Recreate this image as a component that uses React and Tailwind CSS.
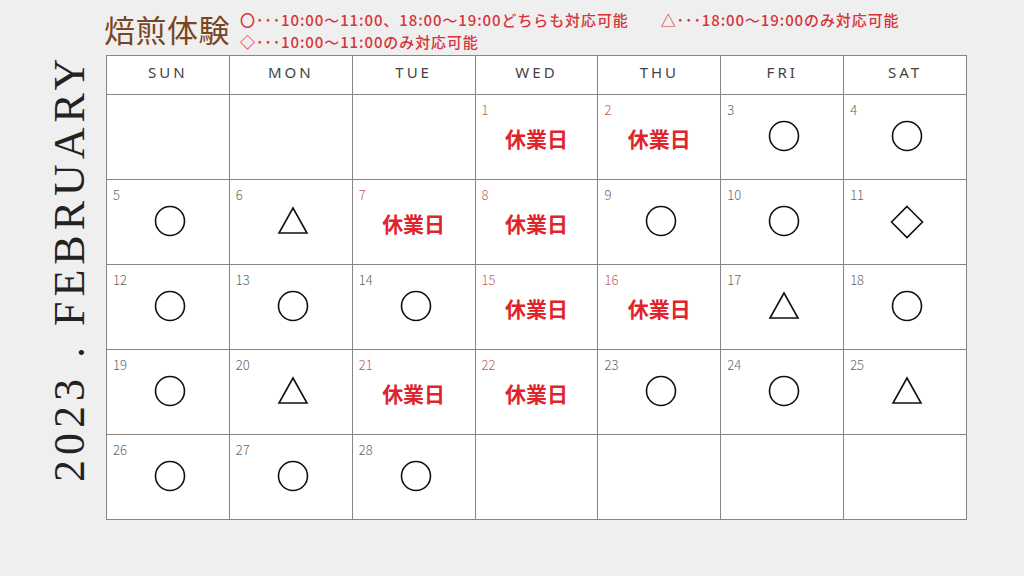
import React from "react";

const DAYS = ["SUN", "MON", "TUE", "WED", "THU", "FRI", "SAT"];

// o = both slots, t = evening only, d = morning only, x = closed
const WEEKS = [
  [null, null, null, [1, "x"], [2, "x"], [3, "o"], [4, "o"]],
  [[5, "o"], [6, "t"], [7, "x"], [8, "x"], [9, "o"], [10, "o"], [11, "d"]],
  [[12, "o"], [13, "o"], [14, "o"], [15, "x"], [16, "x"], [17, "t"], [18, "o"]],
  [[19, "o"], [20, "t"], [21, "x"], [22, "x"], [23, "o"], [24, "o"], [25, "t"]],
  [[26, "o"], [27, "o"], [28, "o"], null, null, null, null],
];

const JP = { fontFamily: '"Noto Sans CJK JP", "Noto Sans", sans-serif' };

function Mark({ type }) {
  if (type === "o") {
    return (
      <svg width="32" height="32" viewBox="0 0 32 32">
        <circle cx="16" cy="16" r="14.5" fill="none" stroke="#111" strokeWidth="1.6" />
      </svg>
    );
  }
  if (type === "t") {
    return (
      <svg width="32" height="32" viewBox="0 0 32 32">
        <path d="M16 3 L30 28 L2 28 Z" fill="none" stroke="#111" strokeWidth="1.6" strokeLinejoin="miter" />
      </svg>
    );
  }
  if (type === "d") {
    return (
      <svg width="34" height="34" viewBox="0 0 34 34">
        <path d="M17 1.5 L32.5 17 L17 32.5 L1.5 17 Z" fill="none" stroke="#111" strokeWidth="1.6" />
      </svg>
    );
  }
  return null;
}

function Cell({ day }) {
  if (!day) return <div className="h-[85px] border-r border-b border-[#858585] bg-white" />;
  const [num, type] = day;
  const closed = type === "x";
  return (
    <div className="h-[85px] border-r border-b border-[#858585] bg-white flex flex-col">
      <div className={`pl-[6px] pt-[7px] text-[13px] leading-[16px] font-light ${closed ? "text-[#c65a5a]" : "text-[#666]"}`} style={JP}>
        {num}
      </div>
      {closed ? (
        <div className="mt-[7px] flex justify-center text-[21px] leading-[26px] font-bold text-[#e0242c]" style={JP}>
          休業日
        </div>
      ) : (
        <div className="mt-[2px] pl-[4px] flex justify-center">
          <Mark type={type} />
        </div>
      )}
    </div>
  );
}

export default function App() {
  return (
    <div className="w-[1024px] h-[576px] bg-[#efefef] flex overflow-hidden">
      <div className="w-[104px] flex justify-center pt-[55px] pl-[36px]">
        <div
          className="[writing-mode:vertical-rl] rotate-180 text-[44px] leading-[44px] tracking-[5px] text-[#222] whitespace-nowrap h-[427px]"
          style={{ fontFamily: '"Liberation Serif", "DejaVu Serif", serif' }}
        >
          2023 . FEBRUARY
        </div>
      </div>

      <div className="flex flex-col pt-[10px]">
        <div className="flex items-start gap-[10px] h-[45px]">
          <div className="text-[31px] leading-[38px] text-[#7a4522] tracking-[0.5px]" style={JP}>
            焙煎体験
          </div>
          <div className="flex flex-col text-[15px] leading-[22px] tracking-[0.9px] font-medium text-[#d8343c] -mt-[1px]" style={JP}>
            <div className="flex gap-[32px]">
              <span>〇･･･10:00～11:00、18:00～19:00どちらも対応可能</span>
              <span>△･･･18:00～19:00のみ対応可能</span>
            </div>
            <span>◇･･･10:00～11:00のみ対応可能</span>
          </div>
        </div>

        <div className="w-[861px] ml-[2px] border-l border-t border-[#858585]">
          <div className="grid grid-cols-7">
            {DAYS.map((d) => (
              <div
                key={d}
                className="h-[39px] pb-[5px] border-r border-b border-[#858585] bg-white flex items-center justify-center text-[15px] tracking-[3px] text-[#444]"
                style={{ fontFamily: '"Noto Sans", sans-serif' }}
              >
                {d}
              </div>
            ))}
            {WEEKS.flat().map((day, i) => (
              <Cell key={i} day={day} />
            ))}
          </div>
        </div>
      </div>
    </div>
  );
}
